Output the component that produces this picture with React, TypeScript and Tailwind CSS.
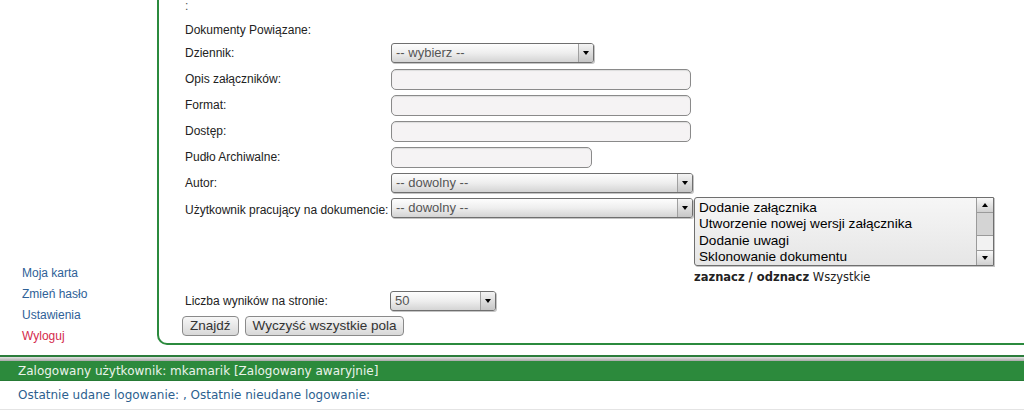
function Select({ value, width }: { value: string; width: string }) {
	return (
		<div className={`flex h-[20px] ${width} overflow-hidden rounded-[3px] border border-[#6f6f6f] bg-linear-to-b from-[#fdfdfd] via-[#eeeeee] to-[#d4d4d4] shadow-[1px_1px_0_#c4c4c4]`}>
			<div className="flex-1 pl-[4px] text-[13px] leading-[18px] text-[#555]">{value}</div>
			<div className="flex w-[15px] items-center justify-center border-l border-[#a0a0a0] bg-linear-to-b from-[#f4f4f4] to-[#c6c6c6]">
				<div className="h-0 w-0 border-x-[3.5px] border-t-[4px] border-x-transparent border-t-black" />
			</div>
		</div>
	)
}

function Input({ width }: { width: string }) {
	return <div className={`h-[21px] ${width} rounded-[5px] border border-[#8a8a8a] bg-[#f5f3f4] shadow-[inset_0_1px_1px_#ddd]`} />
}

function Row({ label, children }: { label: string; children: React.ReactNode }) {
	return (
		<div className="flex h-[26px] items-center">
			<div className="w-[209px] pl-[3px]">{label}</div>
			{children}
		</div>
	)
}

function Listbox() {
	const items = ['Dodanie załącznika', 'Utworzenie nowej wersji załącznika', 'Dodanie uwagi', 'Sklonowanie dokumentu']
	return (
		<div className="flex h-[69px] w-[300px] overflow-hidden rounded-l-[3px] border border-[#6f6f6f] bg-linear-to-b from-[#f6f6f6] to-[#e6e6e6] shadow-[1px_1px_0_#c4c4c4]">
			<div className="flex-1 pl-[4px] pt-[2px] font-['Liberation_Sans',Arial,sans-serif] text-[13.6px] leading-[16.3px] text-black">
				{items.map((it) => (
					<div key={it}>{it}</div>
				))}
			</div>
			<div className="flex w-[17px] flex-col border-l border-[#9a9a9a] bg-[#f0f0f0]">
				<div className="flex h-[15px] items-center justify-center border-b border-[#9a9a9a] bg-linear-to-b from-[#f8f8f8] to-[#d0d0d0]">
					<div className="h-0 w-0 border-x-[3.5px] border-b-[4px] border-x-transparent border-b-black" />
				</div>
				<div className="h-[23px] border-b border-[#9a9a9a] bg-[#d4d4d4]" />
				<div className="flex-1 bg-[#f2f2f2]" />
				<div className="flex h-[15px] items-center justify-center border-t border-[#9a9a9a] bg-linear-to-b from-[#f8f8f8] to-[#d0d0d0]">
					<div className="h-0 w-0 border-x-[3.5px] border-t-[4px] border-x-transparent border-t-black" />
				</div>
			</div>
		</div>
	)
}

function Button({ children }: { children: React.ReactNode }) {
	return (
		<div className="flex h-[20px] items-center rounded-[4px] border border-[#8a8a8a] bg-linear-to-b from-[#f7f7f7] to-[#d8d8d8] px-[7px] font-['Liberation_Sans',Arial,sans-serif] text-[13.5px] text-[#333]">
			{children}
		</div>
	)
}

export default function App() {
	return (
		<div className="h-[413px] w-[1024px] overflow-hidden bg-white font-['Liberation_Sans',Arial,sans-serif] text-[12px] text-[#222]">
			<div className="flex h-[345px]">
				<div className="-mb-[2px] flex w-[157px] flex-col justify-end pl-[22px] leading-[21px] text-[#2e6197]">
					<div>Moja karta</div>
					<div>Zmień hasło</div>
					<div>Ustawienia</div>
					<div className="text-[#d42a4c]">Wyloguj</div>
				</div>
				<div className="flex-1 rounded-bl-[10px] border-b-2 border-l-2 border-[#2b8a3d] pl-[23px]">
					<div className="h-[12px] pl-[3px] leading-[12px] text-[#555]">:</div>
					<div className="flex h-[28px] items-center pl-[3px] pt-[7px]">Dokumenty Powiązane:</div>
					<Row label="Dziennik:">
						<Select value="-- wybierz --" width="w-[203px]" />
					</Row>
					<Row label="Opis załączników:">
						<Input width="w-[300px]" />
					</Row>
					<Row label="Format:">
						<Input width="w-[300px]" />
					</Row>
					<Row label="Dostęp:">
						<Input width="w-[300px]" />
					</Row>
					<Row label="Pudło Archiwalne:">
						<Input width="w-[201px]" />
					</Row>
					<Row label="Autor:">
						<Select value="-- dowolny --" width="w-[302px]" />
					</Row>
					<div className="flex pt-[2px]">
						<div className="w-[209px] pl-[3px] pt-[3px]">Użytkownik pracujący na dokumencie:</div>
						<Select value="-- dowolny --" width="w-[302px]" />
						<div className="ml-[1px] flex flex-col">
							<div className="-mt-[1px]">
								<Listbox />
							</div>
							<div className="mt-[4px] h-[14px] font-['DejaVu_Sans',Verdana,sans-serif] text-[11.5px] leading-[14px] text-[#222]">
								<span className="font-bold">zaznacz / odznacz</span> Wszystkie
							</div>
						</div>
					</div>
					<div className="mt-[4px] flex h-[26px] items-center">
						<div className="w-[208px] pl-[3px]">Liczba wyników na stronie:</div>
						<Select value="50" width="w-[106px]" />
					</div>
					<div className="mt-[2px] flex gap-[6px]">
						<Button>Znajdź</Button>
						<Button>Wyczyść wszystkie pola</Button>
					</div>
				</div>
			</div>
			<div className="mt-[10px] h-[2px] bg-[#2b7d3b]" />
			<div className="h-[4px] bg-linear-to-b from-[#e2e2e2] to-[#a9a9a9]" />
			<div className="flex h-[20px] items-center border-b border-[#267a35] bg-[#2c8a3c] pl-[18px] font-['DejaVu_Sans',Verdana,sans-serif] text-[12px] text-[#eaf3ea]">
				Zalogowany użytkownik: mkamarik [Zalogowany awaryjnie]
			</div>
			<div className="flex h-[29px] items-center border-b border-[#e4e4e4] pl-[18px] font-['DejaVu_Sans',Verdana,sans-serif] text-[12px] text-[#2d5f8f]">
				Ostatnie udane logowanie: , Ostatnie nieudane logowanie:
			</div>
		</div>
	)
}
